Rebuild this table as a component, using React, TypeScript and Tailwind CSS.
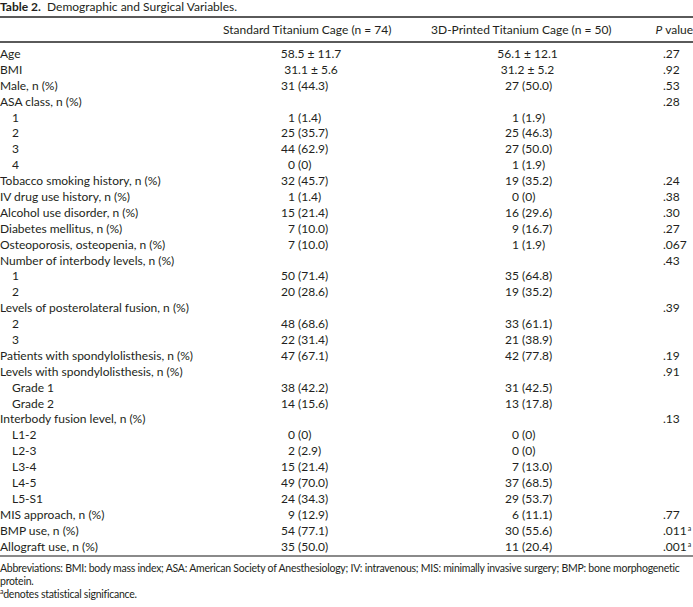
type Row =
  | { kind: 'mean'; label: string; a: string; b: string; p?: string }
  | { kind: 'count'; label: string; a: [string, string]; b: [string, string]; p?: string; sig?: boolean; sub?: boolean }
  | { kind: 'head'; label: string; p?: string };

const ROWS: Row[] = [
  { kind: 'mean', label: 'Age', a: '58.5 ± 11.7', b: '56.1 ± 12.1', p: '.27' },
  { kind: 'mean', label: 'BMI', a: '31.1 ± 5.6', b: '31.2 ± 5.2', p: '.92' },
  { kind: 'count', label: 'Male, n (%)', a: ['31', '44.3'], b: ['27', '50.0'], p: '.53' },
  { kind: 'head', label: 'ASA class, n (%)', p: '.28' },
  { kind: 'count', sub: true, label: '1', a: ['1', '1.4'], b: ['1', '1.9'] },
  { kind: 'count', sub: true, label: '2', a: ['25', '35.7'], b: ['25', '46.3'] },
  { kind: 'count', sub: true, label: '3', a: ['44', '62.9'], b: ['27', '50.0'] },
  { kind: 'count', sub: true, label: '4', a: ['0', '0'], b: ['1', '1.9'] },
  { kind: 'count', label: 'Tobacco smoking history, n (%)', a: ['32', '45.7'], b: ['19', '35.2'], p: '.24' },
  { kind: 'count', label: 'IV drug use history, n (%)', a: ['1', '1.4'], b: ['0', '0'], p: '.38' },
  { kind: 'count', label: 'Alcohol use disorder, n (%)', a: ['15', '21.4'], b: ['16', '29.6'], p: '.30' },
  { kind: 'count', label: 'Diabetes mellitus, n (%)', a: ['7', '10.0'], b: ['9', '16.7'], p: '.27' },
  { kind: 'count', label: 'Osteoporosis, osteopenia, n (%)', a: ['7', '10.0'], b: ['1', '1.9'], p: '.067' },
  { kind: 'head', label: 'Number of interbody levels, n (%)', p: '.43' },
  { kind: 'count', sub: true, label: '1', a: ['50', '71.4'], b: ['35', '64.8'] },
  { kind: 'count', sub: true, label: '2', a: ['20', '28.6'], b: ['19', '35.2'] },
  { kind: 'head', label: 'Levels of posterolateral fusion, n (%)', p: '.39' },
  { kind: 'count', sub: true, label: '2', a: ['48', '68.6'], b: ['33', '61.1'] },
  { kind: 'count', sub: true, label: '3', a: ['22', '31.4'], b: ['21', '38.9'] },
  { kind: 'count', label: 'Patients with spondylolisthesis, n (%)', a: ['47', '67.1'], b: ['42', '77.8'], p: '.19' },
  { kind: 'head', label: 'Levels with spondylolisthesis, n (%)', p: '.91' },
  { kind: 'count', sub: true, label: 'Grade 1', a: ['38', '42.2'], b: ['31', '42.5'] },
  { kind: 'count', sub: true, label: 'Grade 2', a: ['14', '15.6'], b: ['13', '17.8'] },
  { kind: 'head', label: 'Interbody fusion level, n (%)', p: '.13' },
  { kind: 'count', sub: true, label: 'L1-2', a: ['0', '0'], b: ['0', '0'] },
  { kind: 'count', sub: true, label: 'L2-3', a: ['2', '2.9'], b: ['0', '0'] },
  { kind: 'count', sub: true, label: 'L3-4', a: ['15', '21.4'], b: ['7', '13.0'] },
  { kind: 'count', sub: true, label: 'L4-5', a: ['49', '70.0'], b: ['37', '68.5'] },
  { kind: 'count', sub: true, label: 'L5-S1', a: ['24', '34.3'], b: ['29', '53.7'] },
  { kind: 'count', label: 'MIS approach, n (%)', a: ['9', '12.9'], b: ['6', '11.1'], p: '.77' },
  { kind: 'count', label: 'BMP use, n (%)', a: ['54', '77.1'], b: ['30', '55.6'], p: '.011', sig: true },
  { kind: 'count', label: 'Allograft use, n (%)', a: ['35', '50.0'], b: ['11', '20.4'], p: '.001', sig: true },
];

function Count({ v, w }: { v: [string, string]; w: string }) {
  return (
    <div className="flex">
      <span className={`${w} text-right`}>{v[0]}</span>
      <span className="whitespace-pre"> ({v[1]})</span>
    </div>
  );
}

export default function App() {
  return (
    <div
      className="w-[693px] h-[607px] bg-white text-[#231f20] text-[12px] overflow-hidden"
      style={{ fontFamily: 'Lato, "Open Sans", sans-serif' }}
    >
      <div className="h-[14px] leading-[14px] mb-[2px]">
        <span className="font-bold">Table 2.</span>
        <span className="whitespace-pre">  Demographic and Surgical Variables.</span>
      </div>

      <div className="border-t-2 border-[#5a5a5a] flex items-center h-[25px]">
        <div className="w-[228px]" />
        <div className="w-[166px] text-center whitespace-nowrap">Standard Titanium Cage (n = 74)</div>
        <div className="w-[43px]" />
        <div className="w-[181px] text-center whitespace-nowrap">3D-Printed Titanium Cage (n = 50)</div>
        <div className="w-[45px]" />
        <div className="whitespace-nowrap">
          <i>P</i> value
        </div>
      </div>

      <div className="border-t-2 border-[#5a5a5a] pt-[3px]">
        {ROWS.map((r, i) => (
          <div key={i} className="flex items-center h-[15.9px] leading-[16px]">
            <div className={`w-[228px] whitespace-nowrap ${r.kind === 'count' && r.sub ? 'pl-[12px]' : ''}`}>
              {r.label}
            </div>
            <div className="w-[166px]">
              {r.kind === 'mean' && <div className="text-center">{r.a}</div>}
              {r.kind === 'count' && <Count v={r.a} w="w-[67px]" />}
            </div>
            <div className="w-[43px]" />
            <div className="w-[181px]">
              {r.kind === 'mean' && <div className="text-center">{r.b}</div>}
              {r.kind === 'count' && <Count v={r.b} w="w-[82px]" />}
            </div>
            <div className="w-[45px]" />
            <div className="whitespace-nowrap">
              {r.p}
              {r.kind === 'count' && r.sig && <sup className="text-[7px] ml-[1px]">a</sup>}
            </div>
          </div>
        ))}
      </div>

      <div className="border-t-2 border-[#8a8a8a] pt-[5px] text-[10.5px] leading-[13px] tracking-[-0.25px]">
        <p className="whitespace-nowrap">
          Abbreviations: BMI: body mass index; ASA: American Society of Anesthesiology; IV: intravenous; MIS: minimally
          invasive surgery; BMP: bone morphogenetic
        </p>
        <p>protein.</p>
        <p>
          <sup className="text-[7px]">a</sup>denotes statistical significance.
        </p>
      </div>
    </div>
  );
}
